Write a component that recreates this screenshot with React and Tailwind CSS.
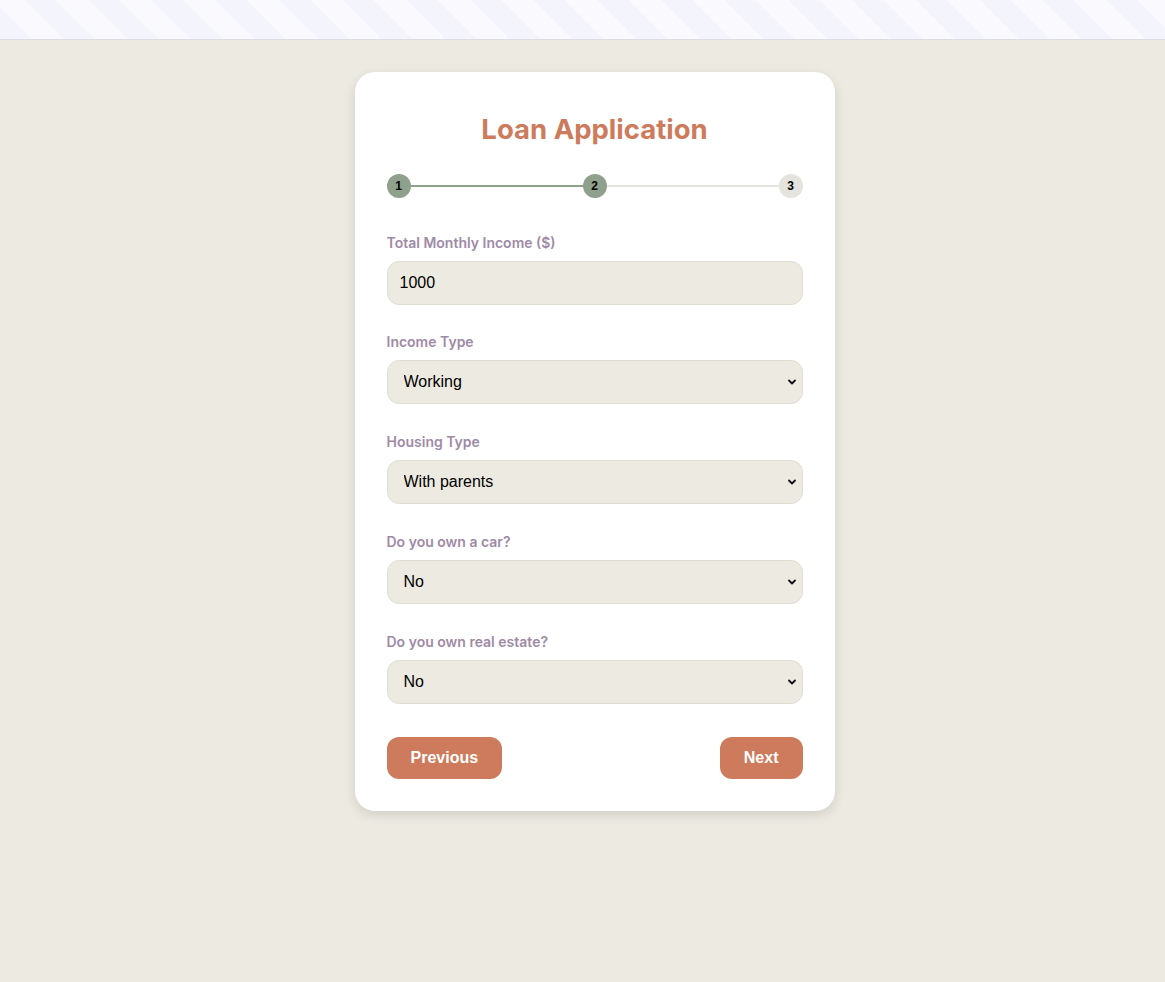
import React, { useState } from 'react';

const fields = [
  { name: 'incomeType', label: 'Income Type', options: ['Working', 'Commercial associate', 'Pensioner', 'State servant', 'Student'] },
  { name: 'housingType', label: 'Housing Type', options: ['With parents', 'House / apartment', 'Rented apartment', 'Municipal apartment', 'Office apartment'] },
  { name: 'ownCar', label: 'Do you own a car?', options: ['No', 'Yes'] },
  { name: 'ownRealty', label: 'Do you own real estate?', options: ['No', 'Yes'] },
];

const Chevron = () => (
  <svg className="pointer-events-none absolute right-[6px] top-1/2 -translate-y-1/2 h-[8px] w-[10px]" viewBox="0 0 10 8" fill="none">
    <path d="M2 2.5L5 5.5L8 2.5" stroke="#111" strokeWidth="1.8" strokeLinecap="round" strokeLinejoin="round" />
  </svg>
);

const Steps = ({ current }) => (
  <div className="flex items-center mb-[35px]">
    {[1, 2, 3].map((n, i) => (
      <React.Fragment key={n}>
        {i > 0 && (
          <div className={`flex-1 h-[2px] ${n <= current ? 'bg-[#8fa08c]' : 'bg-[#e5e3dd]'}`} />
        )}
        <div
          className={`w-6 h-6 rounded-full flex items-center justify-center text-[12px] font-bold text-black font-['Liberation_Sans',Arial,sans-serif] ${
            n <= current ? 'bg-[#8fa08c]' : 'bg-[#e5e3dd]'
          }`}
        >
          {n}
        </div>
      </React.Fragment>
    ))}
  </div>
);

export default function App() {
  const [income, setIncome] = useState('1000');
  const [values, setValues] = useState({
    incomeType: 'Working',
    housingType: 'With parents',
    ownCar: 'No',
    ownRealty: 'No',
  });

  const handleChange = (e) => {
    const { name, value } = e.target;
    setValues(prev => ({ ...prev, [name]: value }));
  };

  return (
    <div className="min-h-[982px] bg-[#edeae2] font-['Liberation_Sans',Arial,sans-serif]">
      {/* striped top bar */}
      <div className="h-10 border-b border-[#dcdde3] bg-[repeating-linear-gradient(45deg,#f3f4fc_0px,#f3f4fc_22px,#f9f9fe_22px,#f9f9fe_45px)]" />

      <div className="flex justify-center pt-8 pl-6">
        <div className="w-[480px] bg-white rounded-[20px] px-8 pt-[40px] pb-8 shadow-[0_4px_12px_rgba(0,0,0,0.12)]">
          <h1 className="text-center text-[27.5px] leading-[34px] font-bold text-[#cd7b5c] font-['Inter',sans-serif] mb-[28px]">
            Loan Application
          </h1>

          <Steps current={2} />

          <div className="mb-[27px]">
            <label className="block text-[14px] leading-5 font-semibold text-[#a08aa6] mb-2 font-['Inter',sans-serif]">
              Total Monthly Income ($)
            </label>
            <input
              type="text"
              value={income}
              onChange={(e) => setIncome(e.target.value)}
              className="w-full h-[44px] rounded-xl bg-[#edeae2] border border-[#e0ddd5] px-3 text-[16px] text-black outline-none"
            />
          </div>

          {fields.map((f) => (
            <div key={f.name} className="mb-[28px] last:mb-0">
              <label className="block text-[14px] leading-5 font-semibold text-[#a08aa6] mb-2 font-['Inter',sans-serif]">
                {f.label}
              </label>
              <div className="relative">
                <select
                  name={f.name}
                  value={values[f.name]}
                  onChange={handleChange}
                  className="appearance-none w-full h-[44px] rounded-xl bg-[#edeae2] border border-[#e0ddd5] pl-4 pr-8 text-[16px] text-black outline-none"
                >
                  {f.options.map((o) => (
                    <option key={o}>{o}</option>
                  ))}
                </select>
                <Chevron />
              </div>
            </div>
          ))}

          <div className="flex justify-between mt-[33px]">
            <button className="h-[42px] px-6 rounded-xl bg-[#cd7b5c] text-white font-bold text-[16px]">
              Previous
            </button>
            <button className="h-[42px] px-6 rounded-xl bg-[#cd7b5c] text-white font-bold text-[16px]">
              Next
            </button>
          </div>
        </div>
      </div>
    </div>
  );
}
